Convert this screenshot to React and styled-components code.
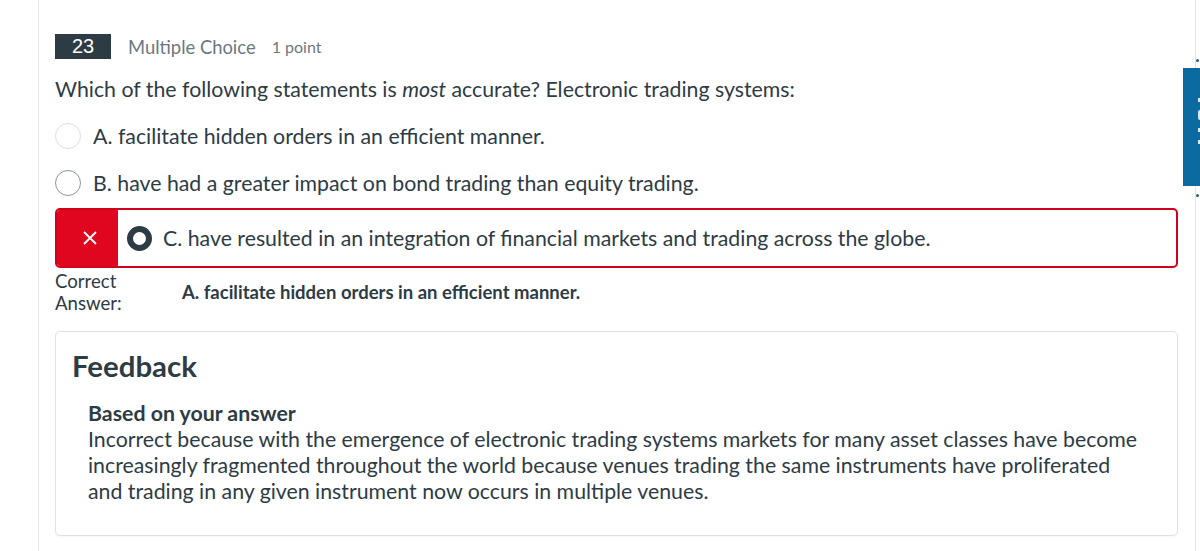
import React from 'react';
import styled, { createGlobalStyle } from 'styled-components';

const GlobalStyle = createGlobalStyle`
  html, body {
    margin: 0;
    padding: 0;
    background: #fff;
  }
  body {
    font-family: Lato, "Open Sans", "Liberation Sans", sans-serif;
    color: #2d3b45;
    overflow: hidden;
  }
`;

const Page = styled.div`
  display: flex;
  height: 551px;
  position: relative;
`;

const Gutter = styled.div`
  width: 38px;
  flex-shrink: 0;
`;

const Main = styled.div`
  width: 1158px;
  border-left: 1px solid #e4e4e4;
  border-right: 1px solid #e4e4e4;
  padding: 34px 17px 0 16px;
  box-sizing: border-box;
`;

const Header = styled.div`
  display: flex;
  align-items: center;
  height: 25px;
`;

const Badge = styled.div`
  width: 56px;
  height: 25px;
  background: #2d3b45;
  color: #fff;
  font-family: "Liberation Sans", Arial, sans-serif;
  font-size: 20px;
  line-height: 25px;
  text-align: center;
`;

const QType = styled.span`
  margin-left: 17px;
  font-size: 18.4px;
  color: #6b7780;
`;

const Points = styled.span`
  margin-left: 16px;
  font-size: 16px;
  color: #6b7780;
`;

const Question = styled.div`
  margin-top: 6px;
  height: 47px;
  display: flex;
  align-items: center;
  font-size: 21.3px;
  color: #2d3b45;
  em {
    font-style: italic;
  }
`;

const Option = styled.div`
  display: flex;
  align-items: center;
  gap: 12px;
  height: 47px;
  font-size: 21.3px;
`;

const Radio = styled.span`
  width: 24px;
  height: 24px;
  border-radius: 50%;
  border: 1px solid ${({ faded }) => (faded ? '#dcdfe1' : '#8b969e')};
  background: #fff;
  flex-shrink: 0;
`;

const Wrong = styled.div`
  margin-top: 2px;
  display: flex;
  align-items: stretch;
  height: 60px;
  border: 2px solid #d0021b;
  border-radius: 5px;
  box-sizing: border-box;
  overflow: hidden;
`;

const WrongMark = styled.div`
  width: 61px;
  background: #e0061f;
  color: #fff;
  display: flex;
  align-items: center;
  justify-content: center;
  padding-left: 4px;
  box-sizing: border-box;
`;

const WrongBody = styled.div`
  display: flex;
  align-items: center;
  gap: 11px;
  padding-left: 9px;
  font-size: 21.3px;
`;

const Selected = styled.span`
  width: 25px;
  height: 25px;
  border-radius: 50%;
  border: 6px solid #2d3b45;
  box-sizing: border-box;
  flex-shrink: 0;
`;

const CorrectRow = styled.div`
  display: flex;
  align-items: center;
  margin-top: 2px;
`;

const CorrectLabel = styled.div`
  width: 127px;
  font-size: 18.6px;
  line-height: 22px;
  color: #2d3b45;
`;

const CorrectText = styled.div`
  font-size: 18.5px;
  font-weight: 700;
  color: #2d3b45;
`;

const Card = styled.div`
  margin-top: 17px;
  border: 1px solid #dfe2e4;
  border-radius: 5px;
  padding: 17px 16px 31px 16px;
  box-shadow: 0 1px 2px rgba(0, 0, 0, 0.04);
`;

const CardTitle = styled.div`
  font-size: 29.4px;
  line-height: 34px;
  font-weight: 700;
  color: #2d3b45;
`;

const CardBody = styled.div`
  margin-top: 17px;
  padding-left: 16px;
  font-size: 21.3px;
  line-height: 26px;
  color: #2d3b45;
`;

const BodyTitle = styled.div`
  font-weight: 700;
`;

const SideTab = styled.div`
  position: absolute;
  right: 0;
  top: 68px;
  width: 17px;
  height: 118px;
  background: #0b6aa0;
  display: flex;
  flex-direction: column;
  align-items: flex-end;
  padding-top: 30px;
  gap: 8px;
  box-sizing: border-box;
`;

const TabMark = styled.span`
  width: 2px;
  height: ${({ h }) => h}px;
  background: rgba(255, 255, 255, 0.85);
  border-radius: ${({ round }) => (round ? '3px 0 0 3px' : '0')};
`;

const Dot = styled.span`
  position: absolute;
  right: 1px;
  top: ${({ top }) => top}px;
  width: 3px;
  height: 3px;
  border-radius: 50%;
  background: #2b5b80;
`;

export default function App() {
  return (
    <>
      <GlobalStyle />
      <Page>
        <Gutter />
        <Main>
          <Header>
            <Badge>23</Badge>
            <QType>Multiple Choice</QType>
            <Points>1 point</Points>
          </Header>
          <Question>
            <span>
              Which of the following statements is <em>most</em> accurate? Electronic trading systems:
            </span>
          </Question>
          <Option>
            <Radio faded />
            <span>A. facilitate hidden orders in an efficient manner.</span>
          </Option>
          <Option>
            <Radio />
            <span>B. have had a greater impact on bond trading than equity trading.</span>
          </Option>
          <Wrong>
            <WrongMark>
              <svg width="14" height="14" viewBox="0 0 14 14">
                <path d="M1 1 L13 13 M13 1 L1 13" stroke="#fff" strokeWidth="1.8" />
              </svg>
            </WrongMark>
            <WrongBody>
              <Selected />
              <span>C. have resulted in an integration of financial markets and trading across the globe.</span>
            </WrongBody>
          </Wrong>
          <CorrectRow>
            <CorrectLabel>
              Correct
              <br />
              Answer:
            </CorrectLabel>
            <CorrectText>A. facilitate hidden orders in an efficient manner.</CorrectText>
          </CorrectRow>
          <Card>
            <CardTitle>Feedback</CardTitle>
            <CardBody>
              <BodyTitle>Based on your answer</BodyTitle>
              Incorrect because with the emergence of electronic trading systems markets for many asset classes have become
              <br />
              increasingly fragmented throughout the world because venues trading the same instruments have proliferated
              <br />
              and trading in any given instrument now occurs in multiple venues.
            </CardBody>
          </Card>
        </Main>
        <Dot top={59} />
        <SideTab>
          <TabMark h={4} />
          <TabMark h={10} round />
          <TabMark h={4} />
          <TabMark h={4} />
        </SideTab>
        <Dot top={194} />
      </Page>
    </>
  );
}
